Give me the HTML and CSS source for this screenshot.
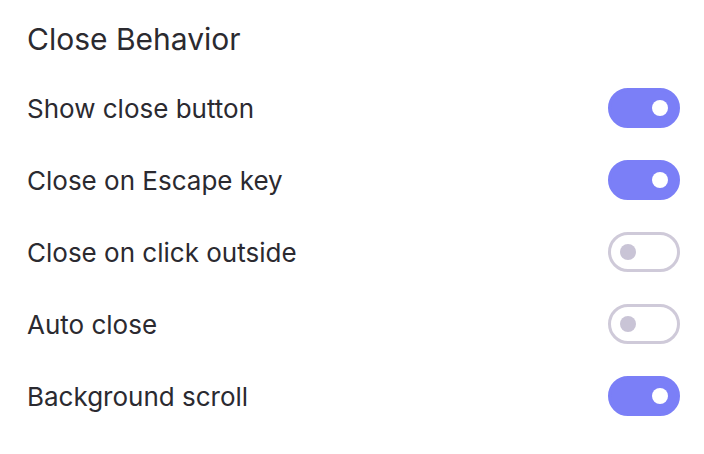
FILE: index.html
```html
<!DOCTYPE html>
<html lang="en">
<head>
<meta charset="utf-8">
<link rel="stylesheet" href="styles.css">
</head>
<body>
<section class="panel">
  <h2 class="title">Close Behavior</h2>
  <div class="rows">
    <div class="row"><span class="label">Show close button</span><span class="switch on"><span class="knob"></span></span></div>
    <div class="row"><span class="label">Close on Escape key</span><span class="switch on"><span class="knob"></span></span></div>
    <div class="row"><span class="label">Close on click outside</span><span class="switch"><span class="knob"></span></span></div>
    <div class="row"><span class="label">Auto close</span><span class="switch"><span class="knob"></span></span></div>
    <div class="row"><span class="label">Background scroll</span><span class="switch on"><span class="knob"></span></span></div>
  </div>
</section>
</body>
</html>
```
FILE: styles.css
```css
html, body { margin: 0; padding: 0; background: #ffffff; }
body { font-family: Inter, "Noto Sans", sans-serif; color: #2b2a30; }
.panel { padding: 19px 24px 0 27px; }
.title { margin: 0; font-size: 30px; font-weight: 400; line-height: 40px; }
.rows { display: flex; flex-direction: column; gap: 32px; margin-top: 29px; }
.row { display: flex; align-items: center; justify-content: space-between; height: 40px; }
.label { font-size: 26px; font-weight: 400; }
.switch { box-sizing: border-box; width: 72px; height: 40px; border-radius: 20px; border: 3px solid #cfcad9; background: #fff; display: flex; align-items: center; padding: 0 9px; }
.switch .knob { width: 16px; height: 16px; border-radius: 50%; background: #c9c4d6; }
.switch.on { background: #7b7ff7; border-color: #7b7ff7; justify-content: flex-end; }
.switch.on .knob { background: #ffffff; }
```
